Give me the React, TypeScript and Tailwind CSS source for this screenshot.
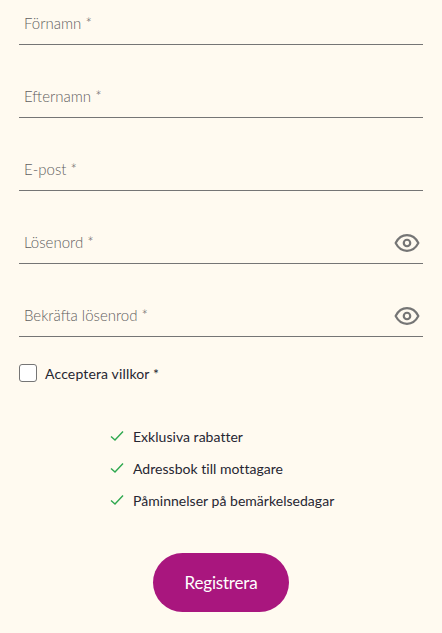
import React from "react";

const FIELDS = [
  { label: "Förnamn *", secret: false },
  { label: "Efternamn *", secret: false },
  { label: "E-post *", secret: false },
  { label: "Lösenord *", secret: true },
  { label: "Bekräfta lösenrod *", secret: true },
];

const PERKS = ["Exklusiva rabatter", "Adressbok till mottagare", "Påminnelser på bemärkelsedagar"];

function EyeIcon() {
  return (
    <svg width="26" height="26" viewBox="0 0 24 24" fill="none" stroke="#757575" strokeWidth="2" strokeLinecap="round" strokeLinejoin="round">
      <path d="M1.5 12C4 7.2 7.6 4.8 12 4.8s8 2.4 10.5 7.2c-2.5 4.8-6.1 7.2-10.5 7.2S4 16.800 1.500 12z" />
      <circle cx="12" cy="12" r="3" />
    </svg>
  );
}

function CheckIcon() {
  return (
    <svg width="14" height="12" viewBox="0 0 14 12" fill="none" stroke="#2ea84f" strokeWidth="1.4">
      <path d="M1 6.500 L5 10 L13 1.500" />
    </svg>
  );
}

export default function App() {
  return (
    <div className="min-h-[633px] overflow-hidden bg-[#fffaf0] px-[19px] font-['Lato',sans-serif]">
      <div className="w-[404px]">
        {FIELDS.map((field, i) => (
          <div key={field.label} className={`flex h-[45px] items-center justify-between border-b border-[#757575] pl-[5px] pr-[3px] ${i > 0 ? "mt-[28px]" : ""}`}>
            <span className="translate-y-[1px] text-[15px] font-light text-[#5f5f5f]">{field.label}</span>
            <span className={field.secret ? "translate-y-[2px]" : "hidden"}><EyeIcon /></span>
          </div>
        ))}
      </div>

      <label className="mt-[26px] flex h-[20px] items-center gap-[8px]">
        <span className="h-[18px] w-[18px] rounded-[3px] border border-[#757575] bg-white" />
        <span className="text-[14px] tracking-[0.15px] text-[#262632]">Acceptera villkor *</span>
      </label>

      <ul className="mt-[42px] ml-[91px] flex flex-col gap-[10px]">
        {PERKS.map((perk) => (
          <li key={perk} className="flex h-[22px] items-center gap-[9px] text-[14px] tracking-[0.03px] text-[#262632]">
            <CheckIcon />
            <span>{perk}</span>
          </li>
        ))}
      </ul>

      <div className="mt-[42px] flex justify-center">
        <button className="h-[59px] w-[136px] rounded-full bg-[#a9167e] text-[17px] tracking-[-0.2px] text-white">Registrera</button>
      </div>
    </div>
  );
}
